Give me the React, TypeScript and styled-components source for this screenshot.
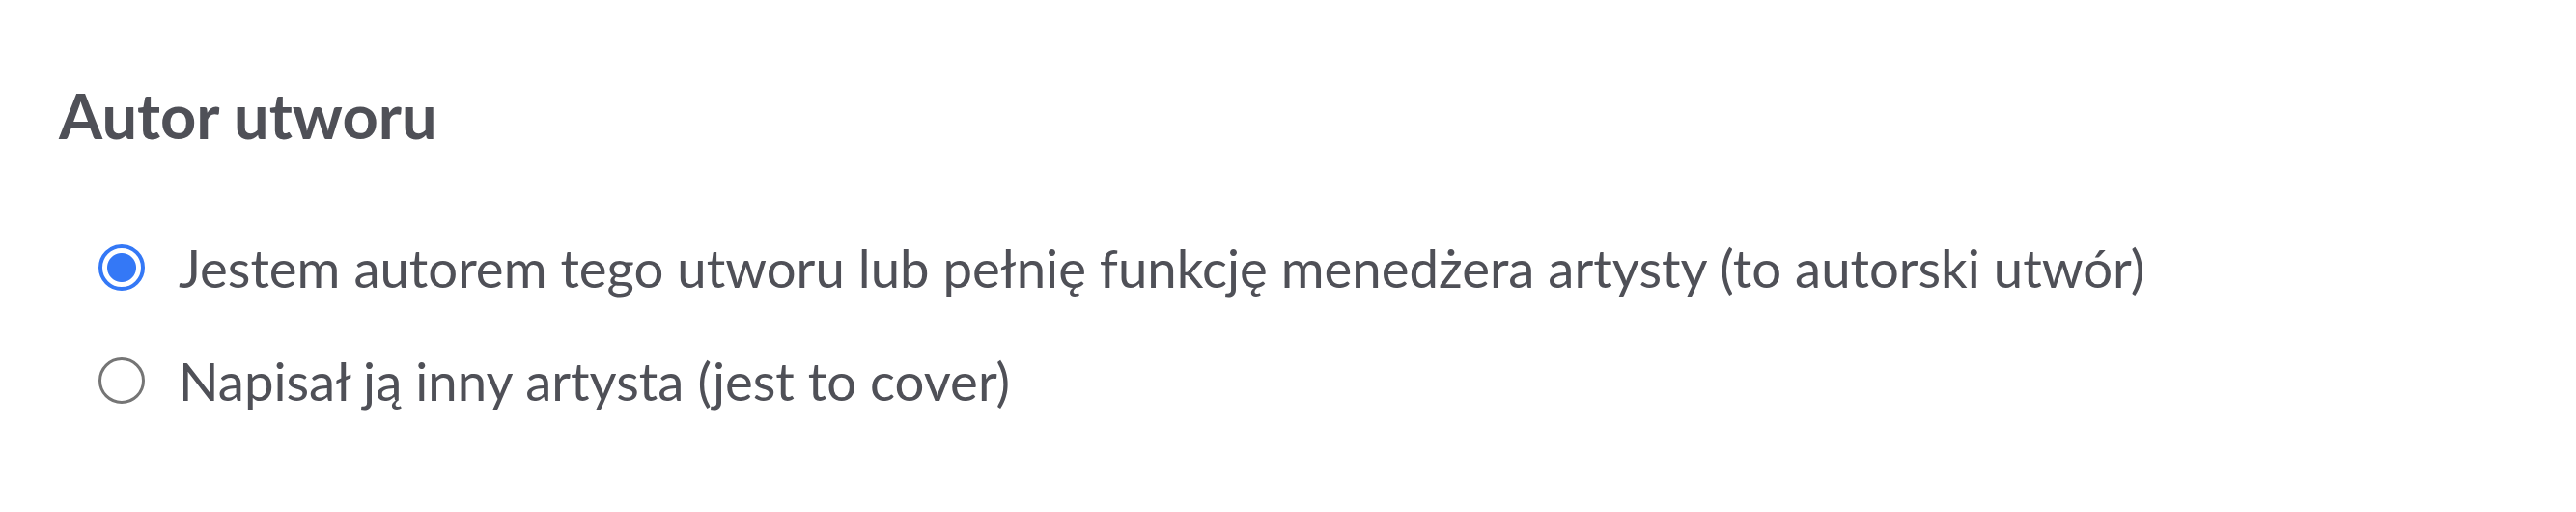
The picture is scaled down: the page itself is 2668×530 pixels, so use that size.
import React, { useState } from 'react';
import styled, { createGlobalStyle } from 'styled-components';

const GlobalStyle = createGlobalStyle`
  html, body {
    margin: 0;
    padding: 0;
    background: #ffffff;
  }
  body {
    font-family: Lato, "Open Sans", sans-serif;
    color: #4f5057;
  }
`;

const Section = styled.fieldset`
  border: none;
  margin: 0;
  padding: 79px 0 0 61px;
  display: flex;
  flex-direction: column;
`;

const Title = styled.legend`
  float: left;
  padding: 0;
  margin: 0;
  font-size: 65px;
  font-weight: 700;
  line-height: 80px;
  color: #4f5057;
`;

const Options = styled.div`
  clear: both;
  display: flex;
  flex-direction: column;
  gap: 49px;
  padding: 84px 0 0 41px;
`;

const Option = styled.label`
  display: flex;
  align-items: center;
  gap: 35px;
  font-size: 54.5px;
  line-height: 68px;
  color: #4f5057;
  cursor: pointer;
`;

const Radio = styled.input.attrs({ type: 'radio' })`
  appearance: none;
  margin: 0;
  flex: none;
  width: 48px;
  height: 48px;
  border-radius: 50%;
  box-sizing: border-box;
  border: 3px solid #757575;
  background: #fff;
  cursor: pointer;

  &:checked {
    border: 4px solid #3478f6;
    background: radial-gradient(circle, #3478f6 0 14.5px, #fff 15.5px);
  }
`;

const options = [
  'Jestem autorem tego utworu lub pełnię funkcję menedżera artysty (to autorski utwór)',
  'Napisał ją inny artysta (jest to cover)',
];

export default function App() {
  const [selected, setSelected] = useState(0);
  return (
    <>
      <GlobalStyle />
      <Section>
        <Title>Autor utworu</Title>
        <Options>
          {options.map((text, i) => (
            <Option key={i}>
              <Radio
                name="author"
                checked={selected === i}
                onChange={() => setSelected(i)}
              />
              {text}
            </Option>
          ))}
        </Options>
      </Section>
    </>
  );
}
